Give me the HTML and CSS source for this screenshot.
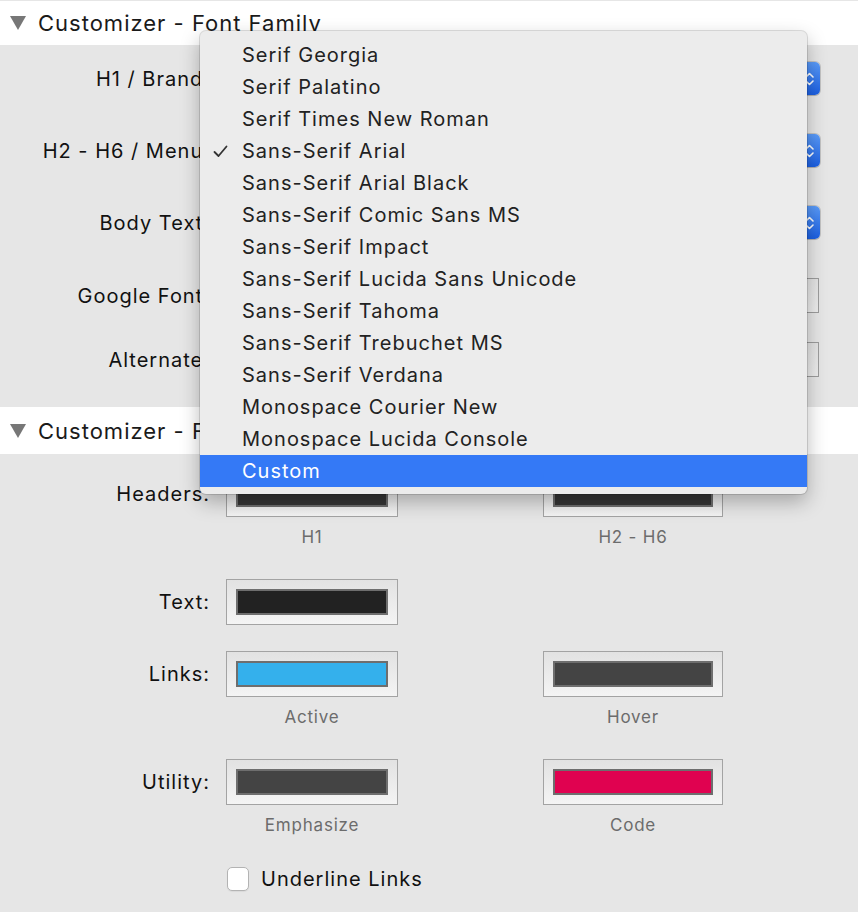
FILE: index.html
```html
<!DOCTYPE html>
<html>
<head>
<meta charset="utf-8">
<link rel="stylesheet" href="styles.css">
</head>
<body>
<div class="page">
  <section class="sect">
    <div class="sect-head"><span class="tri"></span><span>Customizer - Font Family</span></div>
    <div class="sect-body fonts">
      <div class="frow sel-row">
        <label class="lbl">H1 / Brand:</label>
        <div class="select"><span class="sel-val">Sans-Serif Arial</span><span class="sel-btn"><svg width="11" height="18" viewBox="0 0 11 18"><path d="M2 7 L5.5 3.5 L9 7 M2 11 L5.5 14.5 L9 11" fill="none" stroke="#fff" stroke-width="1.6" stroke-linecap="round" stroke-linejoin="round"/></svg></span></div>
      </div>
      <div class="frow sel-row">
        <label class="lbl">H2 - H6 / Menu:</label>
        <div class="select"><span class="sel-val">Sans-Serif Arial</span><span class="sel-btn"><svg width="11" height="18" viewBox="0 0 11 18"><path d="M2 7 L5.5 3.5 L9 7 M2 11 L5.5 14.5 L9 11" fill="none" stroke="#fff" stroke-width="1.6" stroke-linecap="round" stroke-linejoin="round"/></svg></span></div>
      </div>
      <div class="frow sel-row">
        <label class="lbl">Body Text:</label>
        <div class="select"><span class="sel-val">Sans-Serif Arial</span><span class="sel-btn"><svg width="11" height="18" viewBox="0 0 11 18"><path d="M2 7 L5.5 3.5 L9 7 M2 11 L5.5 14.5 L9 11" fill="none" stroke="#fff" stroke-width="1.6" stroke-linecap="round" stroke-linejoin="round"/></svg></span></div>
      </div>
      <div class="frow in-row first-in">
        <label class="lbl">Google Font:</label>
        <input class="text-in" type="text">
      </div>
      <div class="frow in-row">
        <label class="lbl">Alternate:</label>
        <input class="text-in" type="text">
      </div>
    </div>
  </section>

  <section class="sect">
    <div class="sect-head head2"><span class="tri"></span><span>Customizer - Font Colors</span></div>
    <div class="sect-body colors">
      <div class="crow">
        <span class="lbl clbl">Headers:</span>
        <div class="wcol"><div class="well"><div class="swatch c-dark"></div></div><div class="cap">H1</div></div>
        <div class="wcol wide"><div class="well"><div class="swatch c-dark"></div></div><div class="cap">H2 - H6</div></div>
      </div>
      <div class="crow">
        <span class="lbl clbl">Text:</span>
        <div class="wcol"><div class="well"><div class="swatch c-text"></div></div></div>
      </div>
      <div class="crow">
        <span class="lbl clbl">Links:</span>
        <div class="wcol"><div class="well"><div class="swatch c-blue"></div></div><div class="cap">Active</div></div>
        <div class="wcol wide"><div class="well"><div class="swatch c-gray"></div></div><div class="cap">Hover</div></div>
      </div>
      <div class="crow">
        <span class="lbl clbl">Utility:</span>
        <div class="wcol"><div class="well"><div class="swatch c-gray"></div></div><div class="cap">Emphasize</div></div>
        <div class="wcol wide"><div class="well"><div class="swatch c-red"></div></div><div class="cap">Code</div></div>
      </div>
      <label class="check-row"><span class="checkbox"></span><span>Underline Links</span></label>
    </div>
  </section>

  <div class="menu">
    <div class="mi">Serif Georgia</div>
    <div class="mi">Serif Palatino</div>
    <div class="mi">Serif Times New Roman</div>
    <div class="mi checked"><svg class="tick" width="15" height="13" viewBox="0 0 15 13"><path d="M1.5 7 L5.5 11 L13.5 1.5" fill="none" stroke="#333" stroke-width="1.8" stroke-linecap="round" stroke-linejoin="round"/></svg>Sans-Serif Arial</div>
    <div class="mi">Sans-Serif Arial Black</div>
    <div class="mi">Sans-Serif Comic Sans MS</div>
    <div class="mi">Sans-Serif Impact</div>
    <div class="mi">Sans-Serif Lucida Sans Unicode</div>
    <div class="mi">Sans-Serif Tahoma</div>
    <div class="mi">Sans-Serif Trebuchet MS</div>
    <div class="mi">Sans-Serif Verdana</div>
    <div class="mi">Monospace Courier New</div>
    <div class="mi">Monospace Lucida Console</div>
    <div class="mi active">Custom</div>
  </div>
</div>
</body>
</html>
```
FILE: styles.css
```css
* { box-sizing: border-box; }
html, body { margin: 0; padding: 0; }
body {
  background: #e6e6e6;
  font-family: Inter, "Liberation Sans", sans-serif;
  color: #111;
  width: 858px;
  height: 912px;
  overflow: hidden;
}
.page {
  position: relative;
  padding-top: 1px;
  height: 912px;
}
.sect-head {
  background: #fff;
  height: 44px;
  display: flex;
  align-items: center;
  padding-left: 10px;
  gap: 12px;
  font-size: 22px;
  letter-spacing: 1px;
  color: #1a1a1a;
}
.head2 { height: 47px; }
.tri {
  width: 0;
  height: 0;
  border-left: 8px solid transparent;
  border-right: 8px solid transparent;
  border-top: 14px solid #777;
}
.sect-body.fonts {
  padding: 17px 38px 30px 0;
}
.frow {
  display: flex;
  align-items: center;
}
.sel-row + .sel-row { margin-top: 39px; }
.first-in { margin-top: 39px; }
.in-row + .in-row { margin-top: 29px; }
.lbl {
  width: 210px;
  flex: none;
  text-align: right;
  font-size: 20px;
  letter-spacing: 1px;
  margin-right: -1px;
}
.select {
  margin-left: 17px;
  flex: 1;
  height: 33px;
  display: flex;
  background: #fff;
  border-radius: 5px;
  box-shadow: 0 0 0 1px rgba(0,0,0,0.15), 0 1px 1px rgba(0,0,0,0.1);
}
.sel-val {
  flex: 1;
  padding-left: 10px;
  line-height: 33px;
  font-size: 20px;
}
.sel-btn {
  width: 21px;
  border-radius: 0 5px 5px 0;
  background: linear-gradient(#5a9bf9, #1b5fe2);
  display: flex;
  align-items: center;
  justify-content: center;
}
.text-in {
  margin-left: 17px;
  margin-right: 1px;
  flex: 1;
  height: 35px;
  border: 1px solid #9c9c9c;
  background: linear-gradient(#e3e3e3, #ededed);
  outline: none;
}
.sect-body.colors {
  padding: 17px 0 0 0;
}
.crow {
  display: flex;
  align-items: flex-start;
  margin-bottom: 26px;
}
.clbl {
  line-height: 46px;
}
.wcol {
  margin-left: 17px;
  width: 172px;
  display: flex;
  flex-direction: column;
  align-items: center;
}
.wcol.wide {
  margin-left: 145px;
  width: 180px;
}
.well {
  width: 100%;
  height: 46px;
  border: 1px solid #a3a3a3;
  background: linear-gradient(#e2e2e2, #f4f4f4);
  padding: 9px;
}
.swatch {
  height: 26px;
  border: 2px solid #6e6e6e;
}
.c-dark { background: #353535; }
.c-text { background: #222; }
.c-blue { background: #34b0ec; }
.c-gray { background: #444; }
.c-red { background: #e00250; }
.cap {
  margin-top: 10px;
  height: 20px;
  line-height: 20px;
  margin-bottom: 6px;
  font-size: 17px;
  letter-spacing: 0.8px;
  color: #6c6c6c;
}
.check-row {
  display: flex;
  align-items: center;
  gap: 12px;
  margin-left: 227px;
  margin-top: 1px;
  font-size: 20px;
  letter-spacing: 1px;
}
.checkbox {
  width: 22px;
  height: 24px;
  border: 1px solid #b3b3b3;
  border-radius: 5px;
  background: #fff;
  box-shadow: 0 1px 1px rgba(0,0,0,0.06);
}
.menu {
  position: absolute;
  left: 200px;
  top: 31px;
  width: 607px;
  padding: 8px 0 7px;
  background: #ececec;
  border-radius: 6px;
  box-shadow: 0 0 0 1px rgba(0,0,0,0.12), 0 8px 20px rgba(0,0,0,0.28);
  overflow: hidden;
}
.mi {
  position: relative;
  height: 32px;
  line-height: 32px;
  padding-left: 42px;
  font-size: 20px;
  letter-spacing: 1px;
  color: #222;
}
.mi.active {
  background: #3479f6;
  color: #fff;
}
.tick {
  position: absolute;
  left: 13px;
  top: 10px;
}
```
